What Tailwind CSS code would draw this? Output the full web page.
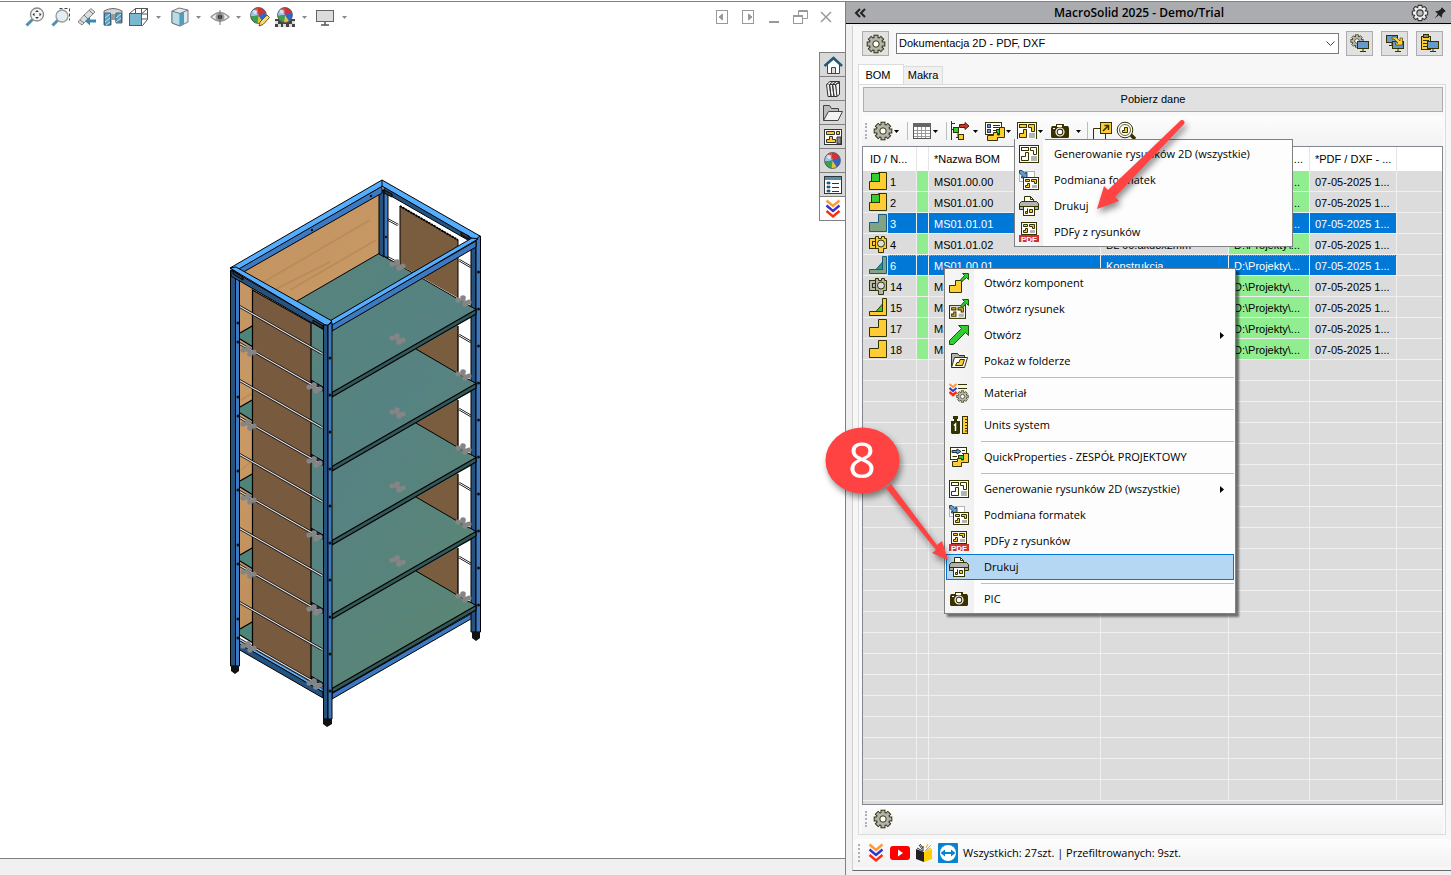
<!DOCTYPE html>
<html lang="pl">
<head>
    <meta charset="UTF-8">
    <meta name="viewport" content="width=device-width, initial-scale=1.0">
    <title>MacroSolid 2025 - Demo/Trial</title>
    <script src="https://cdn.jsdelivr.net/npm/@tailwindcss/browser@4"></script>
</head>
<body class="h-screen overflow-hidden bg-white pt-px font-['Open_Sans',sans-serif] text-[11px] text-black">

    <!-- Icon sprite -->
    <svg class="hidden">
        <symbol id="caret" viewBox="0 0 5 3"><path d="M0 0H5L2.5 3z" fill="currentColor"/></symbol>
        <symbol id="gear" viewBox="0 0 20 20">
            <g fill="#b3b3b3" stroke="#333300">
                <circle cx="10" cy="10" r="6.7"/>
                <rect x="8" y="1.2" width="4" height="17.6"/>
                <rect x="8" y="1.2" width="4" height="17.6" transform="rotate(45 10 10)"/>
                <rect x="8" y="1.2" width="4" height="17.6" transform="rotate(90 10 10)"/>
                <rect x="8" y="1.2" width="4" height="17.6" transform="rotate(135 10 10)"/>
                <circle cx="10" cy="10" r="6.2" stroke="none"/>
                <circle cx="10" cy="10" r="3.2" fill="#fff"/>
            </g>
        </symbol>
        <symbol id="logo" viewBox="0 0 20 20">
            <g fill="none" stroke-width="2.4">
                <path d="M3.5 1.5L10 7L16.5 1.5" stroke="#ff9933"/>
                <path d="M3.5 6.5L10 12L16.5 6.5" stroke="#3333cc"/>
                <path d="M3.5 12L10 17.5L16.5 12" stroke="#ff2a10"/>
            </g>
        </symbol>
        <symbol id="part" viewBox="0 0 18 18"><path d="M9.5 .5H17.5V17.5H.5V8.5H9.5z" fill="#ffcc33" stroke="#333300"/></symbol>
        <symbol id="part-sel" viewBox="0 0 18 18"><path d="M9.5 .5H17.5V17.5H.5V8.5H9.5z" fill="#80a285" stroke="#1a5a7c"/></symbol>
        <symbol id="asm" viewBox="0 0 18 18">
            <path d="M9.5 .5H17.5V17.5H.5V9.5H9.5z" fill="#ffcc33" stroke="#333300"/>
            <rect x="2.5" y="1.5" width="8" height="8" fill="#33cc33" stroke="#333300"/>
        </symbol>
        <symbol id="weld" viewBox="0 0 18 18">
            <path d="M13.5 .5H17.5V17.5H.5V13.5H13.5z" fill="#ffcc33" stroke="#333300"/>
            <path d="M13.5 6V13.5H7z" fill="#33cc33" stroke="#333300"/>
        </symbol>
        <symbol id="weld-sel" viewBox="0 0 18 18">
            <path d="M13.5 .5H17.5V17.5H.5V13.5H13.5z" fill="#80a285" stroke="#1a5a7c"/>
            <path d="M13.5 6V13.5H7z" fill="#1aa284" stroke="#1a5a7c"/>
        </symbol>
        <symbol id="purchased" viewBox="0 0 18 18">
            <g fill="currentColor" stroke="#333300">
                <path d="M6.5 1.5H9.5V3.5H12.5V1.5H15.5V3.5H17.5V13.5H14.5V17.5H9.5V13.5H6.5z"/>
                <rect x=".5" y="3.5" width="6" height="10"/>
                <rect x="3.5" y="6.5" width="3" height="4"/>
                <circle cx="12" cy="8.5" r="3.5" fill="#ddd"/>
            </g>
        </symbol>
        <symbol id="grid" viewBox="0 0 20 20">
            <rect x="1.5" y="2.5" width="17" height="15" fill="#fff" stroke="#555"/>
            <rect x="1" y="2" width="18" height="4" fill="#666"/>
            <path d="M5.5 6V17M9.5 6V17M13.5 6V17M2 9.5H18M2 12.5H18M2 15.5H18" stroke="#999"/>
        </symbol>
        <symbol id="tree" viewBox="0 0 20 20">
            <path d="M1.5 0V19M1.5 2.5H5M1.5 8.5H5M8 8.5V16M6 16.5H9" fill="none" stroke="#333300"/>
            <rect x="3.5" y="6.5" width="5" height="5" fill="#33cc33" stroke="#333300"/>
            <rect x="8.5" y="13.5" width="5" height="5" fill="#ffcc33" stroke="#333300"/>
            <path d="M9.5 3.5H15V1.5L19 5L15 8.5V6.5H9.5z" fill="#cc3333" stroke="#5a1a00"/>
        </symbol>
        <symbol id="list-part" viewBox="0 0 20 20">
            <rect x=".5" y="1.5" width="16" height="12" fill="#fff" stroke="#333300"/>
            <rect x="2.5" y="3.5" width="3" height="3" fill="#6699cc" stroke="#336"/>
            <rect x="2.5" y="8.5" width="3" height="3" fill="#6699cc" stroke="#336"/>
            <path d="M8 4.5H15M8 6.5H15M8 9.5H11" stroke="#333300"/>
            <rect x="11.5" y="8.5" width="4" height="4" fill="#33cc33" stroke="#333300"/>
            <path d="M14.5 6.5H19.5V16.5H12.5V19.5H2.5V14.5H8.5V11.5H12.5V14H14.5z" fill="#ffcc33" stroke="#333300"/>
        </symbol>
        <symbol id="quick" viewBox="0 0 20 20">
            <rect x="1.5" y=".5" width="16" height="12" fill="#fff" stroke="#333300"/>
            <path d="M3 3.5H8V2L12 4.5L8 7V5.5H3z" fill="#6699cc" stroke="#234"/>
            <path d="M13 3.5H16M13 6.5H16M3.5 9.5H8" stroke="#333300"/>
            <rect x="9.5" y="8.5" width="5" height="4" fill="#33cc33" stroke="#333300"/>
            <path d="M14.5 6.5H19.5V15.5H12.5V19.5H3.5V14.5H8.5V11.5H12.5V13H14.5z" fill="#ffcc33" stroke="#333300"/>
        </symbol>
        <symbol id="sheet" viewBox="0 0 20 20">
            <rect x=".5" y="1.5" width="19" height="17" fill="#fff" stroke="#333300"/>
            <g fill="currentColor" stroke="#333300">
                <rect x="2.5" y="3.5" width="7" height="3"/>
                <path d="M11.5 3.5H17.5V10.5H14.5V6.5H11.5z"/>
                <path d="M6.5 8.5H9.5V16.5H2.5V12.5H6.5z"/>
            </g>
            <rect x="12" y="12" width="6" height="5" fill="#b3b3b3"/>
        </symbol>
        <symbol id="sheet-small" viewBox="0 0 16 13">
            <rect x=".5" y=".5" width="15" height="12" fill="#fff" stroke="#333300"/>
            <path d="M2.5 2.5H6.5V4.5H2.5zM8.5 2.5H13.5V6.5H11.5V4.5H8.5zM4.5 6.5H6.5V10.5H2.5V8.5H4.5z" fill="#ffcc33" stroke="#333300"/>
            <rect x="9" y="8" width="5" height="3" fill="#b3b3b3"/>
        </symbol>
        <symbol id="swap" viewBox="0 0 20 20">
            <rect x=".5" y="1.5" width="15" height="10" fill="#fff" stroke="#b3b3b3"/>
            <path d="M.5 .5H3L6.5 4V2.5H8V8H2.5V6.5H4L.5 3z" fill="#6699cc" stroke="#24466b"/>
            <use href="#sheet-small" x="4" y="7" width="16" height="13"/>
        </symbol>
        <symbol id="printer" viewBox="0 0 20 20">
            <path d="M5.5 6.5V.5H11.5L14.5 3.5V6.5z" fill="#fff" stroke="#333300"/>
            <path d="M11.5 .5V3.5H14.5" fill="none" stroke="#333300"/>
            <path d="M2.5 5.5H17.5L19.5 7.5V13.5H.5V7.5z" fill="#b3b3b3" stroke="#333300"/>
            <path d="M.5 10.5H19.5" stroke="#333300"/>
            <rect x="4.5" y="10.5" width="11" height="9" fill="#fff" stroke="#333300"/>
            <path d="M8.5 12.5V17.5H6.5V15.5H8.5M10.5 13.500H13.500V16.500H10.500z" fill="#ffcc33" stroke="#333300"/>
        </symbol>
        <symbol id="pdf" viewBox="0 0 20 20">
            <use href="#sheet-small" x="2" y="0" width="16" height="13"/>
            <rect x="0" y="13" width="20" height="7" fill="#cc3333"/>
            <text x="10" y="19.500" text-anchor="middle" font-family="Liberation Sans, sans-serif" font-size="8" font-weight="700" fill="#fff">PDF</text>
        </symbol>
        <symbol id="camera" viewBox="0 0 20 20">
            <path d="M1 7L2 5H6V3H14V5H18L19 7V16L18 17H2L1 16z" fill="#3a3000"/>
            <rect x="7" y="4" width="5" height="2" fill="#fff"/>
            <rect x="3" y="7" width="2" height="1" fill="#fff"/>
            <circle cx="10" cy="11" r="4" fill="#3a3000" stroke="#fff" stroke-width="1.2"/>
            <circle cx="10" cy="11" r="2.3" fill="#fff"/>
        </symbol>
        <symbol id="popout" viewBox="0 0 20 20">
            <path d="M.5 19V7.5H8M12.5 12V19" fill="none" stroke="#333300"/>
            <rect x="7.5" y="1.5" width="11" height="11" fill="#ffcc33" stroke="#333300"/>
            <path d="M10 10L15.5 4.5M11.5 4.5H15.5V9" fill="none" stroke="#333300" stroke-width="1.5"/>
        </symbol>
        <symbol id="find-part" viewBox="0 0 20 20">
            <path d="M14 13L19 18" stroke="#333300" stroke-width="3.5"/>
            <circle cx="9" cy="9" r="7.8" fill="#fff" stroke="#333300"/>
            <circle cx="9" cy="9" r="5.5" fill="#fff" stroke="#666633"/>
            <path d="M8.5 6.5H11.5V11.5H6.5V9.5H8.5z" fill="#ffcc33" stroke="#333300"/>
        </symbol>
        <symbol id="go" viewBox="0 0 9 9"><path d="M2.5 .5H8.5V6.5L6.5 4.5L2 8.5L.5 7L4.5 2.5z" fill="#33cc33" stroke="#1a5a00"/></symbol>
        <symbol id="open-part" viewBox="0 0 20 20">
            <path d="M6.5 7.5H12.5V19.5H.5V12.5H6.5z" fill="#ffcc33" stroke="#333300"/>
            <use href="#go" x="11" y="0" width="9" height="9"/>
        </symbol>
        <symbol id="open-sheet" viewBox="0 0 20 20">
            <use href="#sheet-small" x="0" y="6" width="17" height="14"/>
            <use href="#go" x="11" y="0" width="9" height="9"/>
        </symbol>
        <symbol id="open" viewBox="0 0 20 20"><path d="M9.5 .5H19.5V10.5L16.5 7.5L4.5 19.5H.5V15.5L12.5 3.5z" fill="#33cc33" stroke="#1a5a00"/></symbol>
        <symbol id="folder-part" viewBox="0 0 20 20">
            <path d="M2.5 16.5V2.5H8.5L10 4.5H15.5V7" fill="#b3b3b3" stroke="#333300"/>
            <path d="M5.5 6.5H18.5L15.5 16.5H2.5z" fill="#fff" stroke="#333300"/>
            <path d="M11 8.5H15.5L13.5 14.5H6.5L8 11.5H10z" fill="#ffcc33" stroke="#333300"/>
        </symbol>
        <symbol id="material" viewBox="0 0 20 20">
            <path d="M.5 1L4 4L7.5 1" fill="none" stroke="#ff9933" stroke-width="2"/>
            <path d="M.5 5L4 8L7.5 5" fill="none" stroke="#3333cc" stroke-width="2"/>
            <path d="M.5 9L4 12L7.5 9" fill="none" stroke="#ff2a10" stroke-width="2.5"/>
            <path d="M9 1.5H18M9 5.5H18" stroke="#333300"/>
            <use href="#gear" x="7" y="7" width="13" height="13"/>
        </symbol>
        <symbol id="units" viewBox="0 0 20 20">
            <path d="M4 1H9V4H8V6H11V18L10 19H3L2 18V6H5V4H4z" fill="#333300"/>
            <path d="M5 10.5L6.5 9V16" fill="none" stroke="#fff" stroke-width="1.5"/>
            <rect x="13.5" y="1.5" width="5" height="17" fill="#ffcc33" stroke="#333300"/>
            <path d="M16 4.5H19M16 7.5H19M16 10.5H19M16 13.5H19M16 16H19" stroke="#333300"/>
        </symbol>
        <symbol id="screen" viewBox="0 0 12 11">
            <rect x=".5" y=".5" width="11" height="7" fill="#6699cc" stroke="#333300"/>
            <path d="M6 8V10M3 10.5H9" stroke="#333300"/>
        </symbol>
        <symbol id="gear-screen" viewBox="0 0 20 20">
            <use href="#gear" x="0" y="0" width="14" height="14"/>
            <use href="#screen" x="7" y="7" width="12" height="11"/>
        </symbol>
        <symbol id="screens" viewBox="0 0 20 20">
            <use href="#screen" x="1" y="1" width="12" height="11"/>
            <use href="#screen" x="7" y="7" width="12" height="11"/>
            <path d="M7 3H11L15 7V4H17.5V11H10.5V9H13L9 5H7z" fill="#ffcc33" stroke="#333300" stroke-width=".6"/>
        </symbol>
        <symbol id="clip-screen" viewBox="0 0 20 20">
            <rect x="1.500" y="2.500" width="9" height="13" fill="#ffcc33" stroke="#333300"/>
            <rect x="3.500" y=".5" width="5" height="3" fill="#888" stroke="#333300"/>
            <path d="M3 6.500H9M3 9.500H9M3 12.500H9" stroke="#333300"/>
            <use href="#screen" x="7" y="7" width="12" height="11"/>
        </symbol>
        <symbol id="ball" viewBox="0 0 16 16">
            <circle cx="8" cy="8" r="7.5" fill="#2f66c8"/>
            <path d="M8 8L7 .5A7.5 7.5 0 0 1 13 2.500L15 5z" fill="#d93030"/>
            <path d="M8 8L7 .5A7.5 7.5 0 0 0 .6 9z" fill="#9fc4ea"/>
            <path d="M8 8L.6 9A7.500 7.500 0 0 0 7 15.500z" fill="#3aa04a"/>
            <path d="M8 8L7 15.500A7.500 7.500 0 0 0 12 14.300z" fill="#e8c23a"/>
            <path d="M8 8L7 .5A7.500 7.500 0 0 0 3.500 2L6 5z" fill="#e04848"/>
            <circle cx="5" cy="4.500" r="2" fill="#fff" fill-opacity=".6"/>
            <circle cx="8" cy="8" r="7.500" fill="none" stroke="#555" stroke-width=".7"/>
        </symbol>
    </svg>

    <div class="flex h-full border-t border-[#808080]">

        <!-- Model view -->
        <main class="flex min-w-0 flex-1 flex-col">
            <div class="flex h-[50px] shrink-0 items-start justify-between pt-[5px] pr-[13px] pl-[25px]">
                <div class="flex items-center text-[#8a8a8a]">
                    <button aria-label="Powiększ do dopasowania" class="mr-[6px]">
                        <svg width="20" height="20" viewBox="0 0 20 20"><path d="M1.5 18.5L7.5 12.5" stroke="#4f8fb0" stroke-width="3"/><circle cx="12" cy="7.5" r="6.5" fill="#f4f4f4" stroke="#888" stroke-width="1.3"/><path d="M12 3L13.8 5H10.2zM12 12L13.8 10H10.2zM7.5 7.5L9.5 5.7V9.3zM16.5 7.5L14.5 5.7V9.3z" fill="#333"/></svg>
                    </button>
                    <button aria-label="Powiększ obszar" class="mr-[6px]">
                        <svg width="20" height="20" viewBox="0 0 20 20"><path d="M8.5 1.5H18.5V13.5" fill="none" stroke="#444" stroke-dasharray="3 2"/><path d="M1.5 18.5L6.5 13.5" stroke="#4f8fb0" stroke-width="3"/><circle cx="11" cy="9" r="6" fill="#e2eef4" stroke="#999" stroke-width="1.3"/></svg>
                    </button>
                    <button aria-label="Poprzedni widok" class="mr-[6px]">
                        <svg width="20" height="20" viewBox="0 0 20 20"><path d="M1 15L7 8L14 1.5L18 5L10 13L5 18z" fill="#ddd" stroke="#888"/><path d="M7 8L11 12M12 3L16 7M3 13L7 16" stroke="#777"/><path d="M19 12.5H13V9.5L8 14L13 18.5V15.5H19z" fill="#3f87ab"/></svg>
                    </button>
                    <button aria-label="Przekrój" class="mr-[6px]">
                        <svg width="20" height="20" viewBox="0 0 20 20"><path d="M1 4Q10-1 19 4V16H13V8H8V18H1z" fill="#d5d5d5" stroke="#666"/><path d="M8 8V13H13V8z" fill="#999"/><path d="M1.5 6H7.5V18H1.5zM13 6H18.5V15H13z" fill="#5aa0c2" stroke="#37667f"/><path d="M2 11L7 7M2 15L7 11M3 18L7 15M13 11L18 7M13 15L18 11" stroke="#c8e4ef"/></svg>
                    </button>
                    <button aria-label="Orientacja widoku" class="mr-[7px]">
                        <svg width="20" height="20" viewBox="0 0 20 20"><path d="M6.5 1.5H18.5V12.5L13.5 18.5H.5V6.5zM6.5 1.5V12H18M18.5 1.5L13 6.5M12.5 2V12M6 7H18" fill="#fff" stroke="#555"/><rect x=".5" y="6.5" width="12" height="12" fill="#7db6d0" stroke="#37667f"/></svg>
                    </button>
                    <svg width="5" height="3" class="mr-[9px]"><use href="#caret"/></svg>
                    <button aria-label="Styl wyświetlania" class="mr-[6px]">
                        <svg width="20" height="20" viewBox="0 0 20 20"><path d="M2 4L9 1L18 3V15L10 19L2 16z" fill="#dceaf0" stroke="#777"/><path d="M2 4L10 6.5V19L2 16z" fill="#b9dbe8" stroke="#777"/><path d="M10 6.5L14 5V17L10 19z" fill="#4f9cbd"/><path d="M10 6.5L18 3" stroke="#777"/></svg>
                    </button>
                    <svg width="5" height="3" class="mr-[9px]"><use href="#caret"/></svg>
                    <button aria-label="Pokaż lub ukryj elementy" class="mr-[6px]">
                        <svg width="20" height="20" viewBox="0 0 20 20"><path d="M1 10Q10 1 19 10Q10 18 1 10z" fill="#f0f0f0" stroke="#999" stroke-width="1.4"/><circle cx="10" cy="10" r="4.5" fill="#999"/><circle cx="10" cy="10" r="2.3" fill="#333"/><path d="M10 3V18" stroke="#777"/></svg>
                    </button>
                    <svg width="5" height="3" class="mr-[9px]"><use href="#caret"/></svg>
                    <button aria-label="Edytuj wygląd" class="mr-[5px]">
                        <svg width="20" height="20" viewBox="0 0 20 20"><use href="#ball" x="0" y="0" width="17" height="17"/><path d="M9 19L10 15L17 8L19.5 10.5L13 17.5z" fill="#f6dc70" stroke="#6b5a20"/></svg>
                    </button>
                    <button aria-label="Zastosuj scenę" class="mr-[7px]">
                        <svg width="20" height="20" viewBox="0 0 20 20"><rect y="12" width="20" height="8" fill="#444"/><path d="M0 14H3V17H0zM3 17H6V20H3zM14 17H17V20H14zM17 14H20V17H17zM8 17H11V20H8z" fill="#ddd"/><use href="#ball" x="2" y="0" width="16" height="16"/></svg>
                    </button>
                    <svg width="5" height="3" class="mr-[8px]"><use href="#caret"/></svg>
                    <button aria-label="Ustawienia widoku" class="mr-[7px]">
                        <svg width="20" height="20" viewBox="0 0 20 20"><rect x="1.5" y="3.5" width="17" height="11" fill="#dcdcdc" stroke="#666"/><path d="M10 15V18M6 18H14" stroke="#555" stroke-width="1.5"/></svg>
                    </button>
                    <svg width="5" height="3"><use href="#caret"/></svg>
                </div>
                <div class="flex items-center pt-[3px]">
                    <button aria-label="Poprzednie okno" class="mr-[13px]"><svg width="13" height="14" viewBox="0 0 13 14" fill="none" stroke="#999"><rect x=".5" y=".5" width="11" height="13"/><path d="M6.5 4V10L3 7z" fill="#999"/></svg></button>
                    <button aria-label="Następne okno" class="mr-[14px]"><svg width="13" height="14" viewBox="0 0 13 14" fill="none" stroke="#999"><rect x=".5" y=".5" width="11" height="13"/><path d="M6.5 4V10L10 7z" fill="#999"/></svg></button>
                    <button aria-label="Minimalizuj" class="mr-[14px]"><svg width="10" height="14"><rect y="11" width="10" height="2" fill="#999"/></svg></button>
                    <button aria-label="Przywróć" class="mr-[12px]"><svg width="15" height="14" viewBox="0 0 15 14" fill="none" stroke="#999"><path d="M5.5 5V.5H14.5V8.5H10M5.5 1.5H14.5"/><rect x=".5" y="5.5" width="9" height="8"/><path d="M.5 6.5H9.5"/></svg></button>
                    <button aria-label="Zamknij"><svg width="12" height="14" viewBox="0 0 12 14"><path d="M1 2L11 12M11 2L1 12" stroke="#999" stroke-width="1.5"/></svg></button>
                </div>
            </div>

            <div class="flex min-h-0 flex-1 items-start">
                <!-- Shelving unit -->
                <div class="flex h-full min-w-0 flex-1 items-center pl-[225px]">
                    <svg width="260" height="558" viewBox="225 176 260 558" role="img" aria-label="Model regału">
                        <defs>
                            <linearGradient id="wood" x2=".3" y2="1"><stop stop-color="#c0925f"/><stop offset=".5" stop-color="#c99a66"/><stop offset="1" stop-color="#bb8c58"/></linearGradient>
                            <linearGradient id="teal" x2=".6" y2="1"><stop stop-color="#56847c"/><stop offset=".5" stop-color="#568282"/><stop offset="1" stop-color="#5b8574"/></linearGradient>
                            <g id="clip" fill="#858585">
                                <circle cx="-5" cy="-1" r="2.6"/><circle cx="0" cy="-3" r="2.8"/><circle cx="2" cy="3" r="2.8"/><circle cx="6" cy="1" r="2.6"/>
                                <path d="M-5-1L6 1" stroke="#858585" stroke-width="2"/>
                            </g>
                            <g id="bay">
                                <path d="M416 349.5L458 325.5V373z" fill="#7a5c3f"/>
                                <path d="M458 325L471 318V381L458 373z" fill="#fff"/>
                                <path d="M458 326V373" stroke="#000" stroke-width="1.3"/>
                                <path d="M416 349L476 384" stroke="#000"/>
                                <path d="M459 335L471 342" stroke="#000" stroke-width="2.4"/>
                                <path d="M459 335L471 342" stroke="#fff"/>
                            </g>
                            <g id="edge">
                                <path d="M469 305.5L476 309.5L469 314z" fill="#568282"/>
                                <path d="M469 305.5L476 309.5" stroke="#000"/>
                                <path d="M332 392.5L476 309.5V314L332 397z" fill="#34575a" stroke="#000" stroke-width="1.2"/>
                            </g>
                            <g id="side">
                                <path d="M240 333L253 325.5V347L240 339z" fill="#4f8478"/>
                                <path d="M240 333L253 325.5M240 339L253 347" stroke="#000" stroke-width="1.3"/>
                                <path d="M311 380L323 387V391L311 384z" fill="#234" stroke="#000"/>
                            </g>
                            <g id="rod">
                                <path d="M237 305L322 353.5" stroke="#111" stroke-width="2.6"/>
                                <path d="M237 305L322 353.5" stroke="#e8e8e8" stroke-width="1.1"/>
                            </g>
                        </defs>

                        <!-- panels -->
                        <path d="M239 272L379 192V254L298 302L253 327V640L239 632z" fill="url(#wood)"/>
                        <path d="M250 290L370 220M262 296L330 262M290 290L376 240M241 400L251 394M241 470L251 462M241 560L251 552" stroke="#a97c4b" stroke-opacity=".45" stroke-width="1.5"/>
                        <path d="M297 301L379 253.5L477 310V608L333 692L311 690V312z" fill="url(#teal)"/>
                        <g stroke="#4a8a8c" stroke-opacity=".35" stroke-width="2">
                            <path d="M325 310L400 280M335 340L440 300M335 362L420 322M335 430L450 368M335 445L420 396M335 505L450 440M335 525L420 478M335 580L450 514M335 600L420 550M335 650L450 588M335 670L420 622"/>
                        </g>
                        <path d="M297 301L379 253.5L477 310" fill="none" stroke="#000"/>
                        <path d="M458 240L471 247V306L458 298z" fill="#fff"/>
                        <path d="M400 206L458 240V298L400 265z" fill="#7a5c3f"/>
                        <path d="M400 265V206L458 240V298" fill="none" stroke="#000"/>
                        <path d="M400 206L458 240" stroke="#000" stroke-width="2" stroke-dasharray="2 1"/>
                        <g stroke="#000" stroke-width="2.4"><path d="M387 219L398 225M387 257L398 263M459 260L471 267"/></g>
                        <g stroke="#fff"><path d="M387 219L398 225M387 257L398 263M459 260L471 267"/></g>

                        <use href="#bay"/><use href="#bay" y="74"/><use href="#bay" y="148"/><use href="#bay" y="222"/>
                        <use href="#side"/><use href="#side" y="74"/><use href="#side" y="148"/><use href="#side" y="222"/><use href="#side" y="296"/>

                        <!-- lower rails -->
                        <path d="M332 693.5L476 611V616L332 699z" fill="#3c79c0" stroke="#000"/>
                        <path d="M238 640L323 689V692L238 643z" fill="#5ab0ff" stroke="#000" stroke-width=".7"/>
                        <path d="M238 643L323 692V698L238 649z" fill="#26527f" stroke="#000"/>

                        <!-- left panel -->
                        <path d="M252.5 290L311 323V681L252.5 646z" fill="#785a3e" stroke="#000" stroke-width="1.2"/>
                        <path d="M253 289L311 322" stroke="#c8a070" stroke-dasharray="2 1"/>
                        <use href="#rod"/><use href="#rod" y="37"/><use href="#rod" y="74"/><use href="#rod" y="111"/><use href="#rod" y="148"/>
                        <use href="#rod" y="185"/><use href="#rod" y="222"/><use href="#rod" y="259"/><use href="#rod" y="296"/><use href="#rod" y="333"/>

                        <!-- posts -->
                        <g stroke="#000">
                            <path d="M379 190H384V257L379 254z" fill="#26527f"/>
                            <path d="M384 192H388V258L384 256z" fill="#3c79c0"/>
                            <path d="M471 240H476V632H471z" fill="#26527f"/>
                            <path d="M476 236H480.5V632H476z" fill="#3c79c0"/>
                            <path d="M230.5 270H235.5V666H230.5z" fill="#26527f"/>
                            <path d="M235.5 272H239.5V666H235.5z" fill="#3c79c0"/>
                        </g>

                        <use href="#edge"/><use href="#edge" y="74"/><use href="#edge" y="148"/><use href="#edge" y="222"/><use href="#edge" y="296"/>

                        <!-- top frame -->
                        <g stroke="#000">
                            <path d="M236 269L382 186V193L240 274z" fill="#3c79c0"/>
                            <path d="M230 268L382 180L386 184L237 270z" fill="#55adff"/>
                            <path d="M384 186L473 237V243L384 192z" fill="#26527f"/>
                            <path d="M382 180L480 236L475 240L382 186z" fill="#55adff"/>
                            <path d="M332 324L476 241V247L332 331z" fill="#3c79c0"/>
                            <path d="M328 322L472 238L478 239L332 325z" fill="#55adff"/>
                            <path d="M231 270L326 325V331L231 276z" fill="#26527f"/>
                            <path d="M230 268L236 267L332 321L327 326z" fill="#55adff"/>
                            <path d="M323.5 325H328V719H323.5z" fill="#26527f"/>
                            <path d="M328 325L332 322.5V719H328z" fill="#3c79c0"/>
                        </g>
                        <g fill="#333" stroke="#000">
                            <path d="M384 190L392 194V197L384 193zM461 232L469 236V239L461 235zM233 271L243 277V280L233 274zM313 320L323 326V329L313 323z"/>
                        </g>
                        <g fill="#111">
                            <path d="M472 632H480V638L476 641L472 638zM231 666H239V671L235 674L231 671zM323 719H332V724L327 727L323 724z"/>
                            <g id="bolts"><circle cx="330" cy="358" r="1.5"/><circle cx="330" cy="395" r="1.5"/><circle cx="478.5" cy="272" r="1.5"/><circle cx="478.5" cy="309" r="1.5"/><circle cx="238" cy="323" r="1.5"/><circle cx="238" cy="342" r="1.5"/></g>
                            <use href="#bolts" y="74"/><use href="#bolts" y="148"/><use href="#bolts" y="222"/><use href="#bolts" y="296"/>
                            <circle cx="312" cy="230" r="1.2"/><circle cx="371" cy="196" r="1.2"/><circle cx="386" cy="237" r="1.2"/>
                        </g>

                        <g id="clips-row"><use href="#clip" x="248" y="351"/><use href="#clip" x="314" y="388"/><use href="#clip" x="463" y="301"/></g>
                        <use href="#clips-row" y="74"/><use href="#clips-row" y="148"/><use href="#clips-row" y="222"/><use href="#clips-row" y="296"/>
                        <use href="#clip" x="397" y="265"/><use href="#clip" x="397" y="339"/><use href="#clip" x="397" y="413"/><use href="#clip" x="397" y="487"/><use href="#clip" x="397" y="561"/>
                    </svg>
                </div>

                <!-- Task pane tabs -->
                <nav class="-mr-px flex w-[27px] shrink-0 flex-col border-r border-b border-l border-[#808080]">
                    <button aria-label="Zasoby" class="flex h-6 items-center justify-center border-t border-[#808080] bg-[#d9d9d9]"><svg width="20" height="20" viewBox="0 0 20 20"><path d="M4.5 9V18.5H16.5V9L10.5 4z" fill="#fff" stroke="#444"/><path d="M8.5 18V12.5H12.5V18" fill="#ddd" stroke="#444"/><path d="M1.5 11L10.5 3L19 11" fill="none" stroke="#1f5a7d" stroke-width="2.5"/></svg></button>
                    <button aria-label="Biblioteka projektu" class="flex h-6 items-center justify-center border-t border-[#808080] bg-[#d9d9d9]"><svg width="20" height="20" viewBox="0 0 20 20" fill="#f4f4f4" stroke="#333"><path d="M12.5 5.5L16.5 3.5V15.5L13.5 17.5zM9.5 5.5L13.500 2.500L16.500 3.500L12.500 5.500M7.500 6.500L9.500 17.500L13.500 17.500L11.500 5.500z"/><path d="M3.500 5.500H6.500L8 17.500H5zM6.500 5.500H9.500L11 17.500H8zM9.500 5.500H12.500L14 17.500H11z"/><path d="M3.500 5.500L7 2.500H10L6.500 5.500M9.500 5.500L13 2.500H10M12.500 5.500L16.500 2.500H13"/></svg></button>
                    <button aria-label="Eksplorator plików" class="flex h-6 items-center justify-center border-t border-[#808080] bg-[#d9d9d9]"><svg width="20" height="20" viewBox="0 0 20 20" stroke="#444"><path d="M.5 17.5V2.5H6.5L8.5 5.5H15.5V8" fill="#bbb"/><path d="M5.5 8.5H19.5L15 17.5H.5z" fill="#f2f2f2"/></svg></button>
                    <button aria-label="Paleta widoków" class="flex h-6 items-center justify-center border-t border-[#808080] bg-[#d9d9d9]"><svg width="20" height="20" viewBox="0 0 20 20" stroke="#333"><rect x="1.5" y="2.5" width="17" height="15" fill="#fff"/><path d="M3.5 4.5H11.5V7.5H3.5zM13.5 4.5H16.5V7.5H13.5zM6.5 9.5H9.5V12.5H12.5V15.5H3.5V12.5H6.5z" fill="#ffcc33"/><path d="M14 10H18V17H14z" fill="#888"/></svg></button>
                    <button aria-label="Wyglądy i sceny" class="flex h-6 items-center justify-center border-t border-[#808080] bg-[#d9d9d9]"><svg width="17" height="17"><use href="#ball"/></svg></button>
                    <button aria-label="Właściwości niestandardowe" class="flex h-6 items-center justify-center border-t border-[#808080] bg-[#d9d9d9]"><svg width="20" height="20" viewBox="0 0 20 20"><rect x="1.5" y="1.5" width="17" height="17" fill="#fff" stroke="#333"/><rect x="2" y="2" width="16" height="3" fill="#4f8fb0"/><path d="M4 7H7V9H4zM4 11H7V13H4zM4 15H7V17H4z" fill="#1f6a95" stroke="#1f4a6a" stroke-width=".6"/><path d="M9 8.5H16M9 12.5H16M9 16.5H16" stroke="#333"/></svg></button>
                    <button aria-label="MacroSolid" class="flex h-6 items-center justify-center border-t border-[#808080] bg-white"><svg width="20" height="20"><use href="#logo"/></svg></button>
                </nav>
            </div>
            <div class="h-[17px] shrink-0 border-t border-[#808080] bg-[#f0f0f0]"></div>
        </main>

        <!-- MacroSolid panel -->
        <aside class="relative flex w-[606px] shrink-0 flex-col border-l border-[#808080] bg-[#f0f0f0]">
            <header class="flex h-[22px] shrink-0 items-center border-b border-black bg-[#abacaf] pr-1 pl-2 text-xs font-semibold">
                <button aria-label="Zwiń"><svg width="13" height="10" viewBox="0 0 13 10" fill="none" stroke="#222" stroke-width="2"><path d="M6 1L2 5L6 9M11 1L7 5L11 9"/></svg></button>
                <h1 class="flex-1 text-center">MacroSolid 2025 - Demo/Trial</h1>
                <button aria-label="Opcje"><svg width="18" height="18" viewBox="0 0 20 20"><path d="M8 1.5H12L12.6 4L15 2.9L17.3 5.2L16 7.5L18.5 8V12L16 12.6L17.3 15L15 17.3L12.6 16L12 18.5H8L7.4 16L5 17.3L2.7 15L4 12.6L1.5 12V8L4 7.4L2.7 5L5 2.7L7.4 4z" fill="#eee" stroke="#333" stroke-width="1.2"/><circle cx="10" cy="10" r="3.5" fill="#bbb" stroke="#333" stroke-width="1.2"/></svg></button>
                <button aria-label="Przypnij" class="ml-1"><svg width="14" height="14" viewBox="0 0 14 14"><path d="M8.5 .5L13.5 5.5L11.5 6L9.5 8.500L9 12.500L6 9.500L.5 13.500L4.500 8L1.500 5L5.500 4.500L8 2.500z" fill="#222" stroke="#eee" stroke-width=".4"/></svg></button>
            </header>

            <div class="mt-[2px] mb-[4px] ml-[6px] flex min-h-0 flex-1 flex-col border-b border-l border-b-[#696969] border-l-[#d0d0d0] bg-[#f7f7f7]">
                <div class="flex h-[30px] shrink-0 pt-[5px] pr-2 pl-[9px]">
                    <button aria-label="Ustawienia" class="mr-[7px] flex w-[27px] items-center justify-center border border-[#adadad] bg-[#e1e1e1]"><svg width="20" height="20"><use href="#gear"/></svg></button>
                    <div class="relative my-[2px] mr-[7px] flex-1">
                        <select aria-label="Zestaw" class="block h-[21px] w-full appearance-none border border-[#7a7a7a] bg-white pl-[2px] font-['Liberation_Sans',sans-serif] text-[11px] outline-none">
                            <option>Dokumentacja 2D - PDF, DXF</option>
                        </select>
                        <svg class="pointer-events-none absolute top-[8px] right-[4px]" width="9" height="6" viewBox="0 0 9 6"><path d="M.5 .5L4.5 4.5L8.5 .5" fill="none" stroke="#444"/></svg>
                    </div>
                    <div class="flex gap-2">
                        <button aria-label="Ustawienia stanowiska" class="flex w-[27px] items-center justify-center border border-[#adadad] bg-[#e1e1e1]"><svg width="20" height="20"><use href="#gear-screen"/></svg></button>
                        <button aria-label="Kopiuj ustawienia" class="flex w-[27px] items-center justify-center border border-[#adadad] bg-[#e1e1e1]"><svg width="20" height="20"><use href="#screens"/></svg></button>
                        <button aria-label="Wklej ustawienia" class="flex w-[27px] items-center justify-center border border-[#adadad] bg-[#e1e1e1]"><svg width="20" height="20"><use href="#clip-screen"/></svg></button>
                    </div>
                </div>

                <div class="mt-2 flex h-5 shrink-0 items-end pl-[5px] font-['Liberation_Sans',sans-serif]" role="tablist">
                    <button role="tab" aria-selected="true" class="-mb-px h-[21px] w-[46px] border border-b-0 border-[#dcdcdc] bg-white pr-[6px]">BOM</button>
                    <button role="tab" aria-selected="false" class="h-[18px] w-[39px] border border-b-0 border-l-0 border-[#dcdcdc] bg-[#f0f0f0]">Makra</button>
                </div>

                <section class="mr-[5px] ml-[5px] flex min-h-0 flex-1 flex-col border border-[#dcdcdc] bg-[#f9f9f9] pt-[2px] pr-[2px] pl-[3px]">
                    <button class="ml-px h-[25px] shrink-0 border border-[#adadad] bg-[#e1e1e1] font-['Liberation_Sans',sans-serif]">Pobierz dane</button>

                    <div class="mt-[4px] flex h-[30px] shrink-0 items-center rounded bg-linear-to-b from-[#fdfdfd] to-[#f2f2f2] pl-[3px]" role="toolbar">
                        <span class="mr-[6px] h-4 border-l-2 border-dotted border-[#b0b0b0]"></span>
                        <button aria-label="Opcje" class="flex items-center gap-px"><svg width="20" height="20"><use href="#gear"/></svg><svg width="5" height="3"><use href="#caret"/></svg></button>
                        <span class="mr-[4px] ml-[8px] h-[18px] border-l border-[#bdbdbd]"></span>
                        <button aria-label="Kolumny" class="flex items-center gap-px"><svg width="20" height="20"><use href="#grid"/></svg><svg width="5" height="3"><use href="#caret"/></svg></button>
                        <span class="mr-[3px] ml-[8px] h-[18px] border-l border-[#bdbdbd]"></span>
                        <button aria-label="Struktura" class="mr-[7px] flex items-center gap-[3px]"><svg width="20" height="20"><use href="#tree"/></svg><svg width="5" height="3"><use href="#caret"/></svg></button>
                        <button aria-label="Właściwości" class="mr-[6px] flex items-center gap-px"><svg width="20" height="20"><use href="#list-part"/></svg><svg width="5" height="3"><use href="#caret"/></svg></button>
                        <button aria-label="Rysunki" class="mr-[7px] flex items-center gap-px text-[#ffcc33]"><svg width="20" height="20"><use href="#sheet"/></svg><svg width="5" height="3" class="text-black"><use href="#caret"/></svg></button>
                        <button aria-label="Zdjęcie" class="flex items-center gap-[6px]"><svg width="20" height="20"><use href="#camera"/></svg><svg width="5" height="3"><use href="#caret"/></svg></button>
                        <span class="mr-[5px] ml-[6px] h-[18px] border-l border-[#bdbdbd]"></span>
                        <button aria-label="Otwórz w nowym oknie" class="mr-[3px]"><svg width="20" height="20"><use href="#popout"/></svg></button>
                        <button aria-label="Znajdź"><svg width="20" height="20"><use href="#find-part"/></svg></button>
                    </div>

                    <div class="min-h-0 flex-1 overflow-hidden border border-[#828790] bg-[#dcdcdc] font-['Liberation_Sans',sans-serif]">
                        <table class="w-full table-fixed border-separate border-spacing-0">
                            <thead>
                                <tr class="h-6 bg-white text-left">
                                    <th class="w-[54px] border-r border-[#e5e5e5] pl-[7px] font-normal">ID / N...</th>
                                    <th class="w-3 border-r border-[#e5e5e5]"></th>
                                    <th class="w-[172px] border-r border-[#e5e5e5] pl-[5px] font-normal">*Nazwa BOM</th>
                                    <th class="w-32 border-r border-[#e5e5e5]"></th>
                                    <th class="w-[81px] border-r border-[#e5e5e5] pr-[6px] text-right font-normal">...</th>
                                    <th class="w-[87px] border-r border-[#e5e5e5] pl-[5px] font-normal">*PDF / DXF - ...</th>
                                    <th></th>
                                </tr>
                            </thead>
                            <tbody id="bomRows"></tbody>
                        </table>
                    </div>

                    <div class="flex h-[29px] shrink-0 items-center bg-linear-to-b from-[#fdfdfd] to-[#f2f2f2] pb-[2px] pl-[3px]" role="toolbar">
                        <span class="mr-[6px] h-4 border-l-2 border-dotted border-[#b0b0b0]"></span>
                        <button aria-label="Opcje listy"><svg width="20" height="20"><use href="#gear"/></svg></button>
                    </div>
                </section>

                <footer class="mt-1 mb-[3px] flex h-7 shrink-0 items-center rounded bg-linear-to-b from-[#fdfdfd] to-[#f2f2f2] pl-[5px]">
                    <span class="mr-[6px] h-[18px] border-l-2 border-dotted border-[#b0b0b0]"></span>
                    <a href="#" aria-label="MacroSolid" class="mr-1"><svg width="20" height="20"><use href="#logo"/></svg></a>
                    <a href="#" aria-label="YouTube" class="mr-1"><svg width="20" height="20" viewBox="0 0 20 20"><rect y="3" width="20" height="14" rx="3" fill="#f00"/><path d="M8 6.5L13 10L8 13.5z" fill="#fff"/></svg></a>
                    <a href="#" aria-label="Instrukcja" class="mr-1"><svg width="20" height="20" viewBox="0 0 20 20"><path d="M2 6L10 9V19L2 16z" fill="#222"/><path d="M10 9L18 6V16L10 19z" fill="#ffcc00"/><path d="M3 5L9 8V3M5 2L8 6M6 1L9 5" stroke="#333" fill="none"/><path d="M11 8L17 5M12 5L14 1M12 7L17 2" stroke="#e0b000" fill="none"/></svg></a>
                    <a href="#" aria-label="TeamViewer" class="mr-[5px]"><svg width="20" height="20" viewBox="0 0 20 20"><rect width="20" height="20" rx="1" fill="#0a82d2"/><circle cx="10" cy="10" r="8" fill="#fff"/><path d="M2.5 10L7 6.5V9H13V6.5L17.5 10L13 13.5V11H7V13.5z" fill="#0a82d2"/></svg></a>
                    <p>Wszystkich: 27szt. | Przefiltrowanych: 9szt.</p>
                </footer>
            </div>

            <!-- Drawings drop-down -->
            <div role="menu" class="absolute top-[137px] left-[168px] w-[279px] border border-[#808080] bg-[#fdfdfd] bg-linear-to-r from-[#f6f6f6] from-0% via-[#f1f1f1] via-10% to-[#fdfdfd] to-10% p-px">
                <span class="absolute -top-px left-0 h-px w-[30px] bg-[#f6f6f6]"></span>
                <button role="menuitem" class="flex h-[26px] w-full items-center gap-[15px] pl-[3px] text-white"><svg width="20" height="20"><use href="#sheet"/></svg><span class="text-black">Generowanie rysunków 2D (wszystkie)</span></button>
                <button role="menuitem" class="flex h-[26px] w-full items-center gap-[15px] pl-[3px]"><svg width="20" height="20"><use href="#swap"/></svg>Podmiana formatek</button>
                <button role="menuitem" class="flex h-[26px] w-full items-center gap-[15px] pl-[3px]"><svg width="20" height="20"><use href="#printer"/></svg>Drukuj</button>
                <button role="menuitem" class="flex h-[26px] w-full items-center gap-[15px] pl-[3px]"><svg width="20" height="20"><use href="#pdf"/></svg>PDFy z rysunków</button>
            </div>

            <!-- Row context menu -->
            <div role="menu" class="absolute top-[266px] left-[98px] w-[292px] border border-[#808080] bg-[#fdfdfd] bg-linear-to-r from-[#f6f6f6] from-0% via-[#f1f1f1] via-10% to-[#fdfdfd] to-10% p-px shadow-[3px_3px_2px_rgba(0,0,0,0.5)]">
                <button role="menuitem" class="flex h-[26px] w-full items-center gap-[15px] pl-[3px]"><svg width="20" height="20"><use href="#open-part"/></svg>Otwórz komponent</button>
                <button role="menuitem" class="flex h-[26px] w-full items-center gap-[15px] pl-[3px]"><svg width="20" height="20"><use href="#open-sheet"/></svg>Otwórz rysunek</button>
                <button role="menuitem" class="flex h-[26px] w-full items-center gap-[15px] pr-[10px] pl-[3px]"><svg width="20" height="20"><use href="#open"/></svg>Otwórz<svg class="ml-auto" width="4" height="7"><path d="M0 0L4 3.5L0 7z"/></svg></button>
                <button role="menuitem" class="flex h-[26px] w-full items-center gap-[15px] pl-[3px]"><svg width="20" height="20"><use href="#folder-part"/></svg>Pokaż w folderze</button>
                <hr class="mt-[3px] mb-[2px] ml-[35px] border-[#bdbdbd]">
                <button role="menuitem" class="flex h-[26px] w-full items-center gap-[15px] pl-[3px]"><svg width="20" height="20"><use href="#material"/></svg>Materiał</button>
                <hr class="mt-[3px] mb-[2px] ml-[35px] border-[#bdbdbd]">
                <button role="menuitem" class="flex h-[26px] w-full items-center gap-[15px] pl-[3px]"><svg width="20" height="20"><use href="#units"/></svg>Units system</button>
                <hr class="mt-[3px] mb-[2px] ml-[35px] border-[#bdbdbd]">
                <button role="menuitem" class="flex h-[26px] w-full items-center gap-[15px] pl-[3px]"><svg width="20" height="20"><use href="#quick"/></svg>QuickProperties - ZESPÓŁ PROJEKTOWY</button>
                <hr class="mt-[3px] mb-[2px] ml-[35px] border-[#bdbdbd]">
                <button role="menuitem" class="flex h-[26px] w-full items-center gap-[15px] pr-[10px] pl-[3px] text-white"><svg width="20" height="20"><use href="#sheet"/></svg><span class="text-black">Generowanie rysunków 2D (wszystkie)</span><svg class="ml-auto text-black" width="4" height="7"><path d="M0 0L4 3.5L0 7z"/></svg></button>
                <button role="menuitem" class="flex h-[26px] w-full items-center gap-[15px] pl-[3px]"><svg width="20" height="20"><use href="#swap"/></svg>Podmiana formatek</button>
                <button role="menuitem" class="flex h-[26px] w-full items-center gap-[15px] pl-[3px]"><svg width="20" height="20"><use href="#pdf"/></svg>PDFy z rysunków</button>
                <button role="menuitem" class="flex h-[26px] w-full items-center gap-[15px] border border-[#0078d7] bg-[#b5d7f3] pl-[2px]"><svg width="20" height="20"><use href="#printer"/></svg>Drukuj</button>
                <hr class="mt-[3px] mb-[2px] ml-[35px] border-[#bdbdbd]">
                <button role="menuitem" class="flex h-[26px] w-full items-center gap-[15px] pl-[3px]"><svg width="20" height="20"><use href="#camera"/></svg>PIC</button>
            </div>

            <!-- Step callout and arrows -->
            <svg class="pointer-events-none absolute top-[108px] left-[-26px] drop-shadow-[2px_4px_3px_rgba(0,0,0,0.45)]" width="400" height="480" viewBox="820 110 400 480" fill="#ff4343">
                <path d="M1180.5 120.5A2.5 2.5 0 0 1 1184 124L1115 197L1119 201L1097 209L1104 186L1108 190z"/>
                <path d="M886 488L891 484L937 545L942 541L948 560L932 553L936 550z"/>
                <ellipse cx="862.5" cy="460.5" rx="37" ry="33"/>
                <text x="862" y="478" text-anchor="middle" font-family="Open Sans, sans-serif" font-size="49" fill="#fff">8</text>
            </svg>
        </aside>
    </div>

    <script>
        const rows = [
            { id: 1, icon: 'asm', name: 'MS01.00.00', desc: '' },
            { id: 2, icon: 'asm', name: 'MS01.01.00', desc: '' },
            { id: 3, icon: 'part-sel', name: 'MS01.01.01', desc: '', selected: true },
            { id: 4, icon: 'purchased', name: 'MS01.01.02', desc: 'BL 60.aku8x2mm', tint: 'text-[#ffcc33]' },
            { id: 6, icon: 'weld-sel', name: 'MS01.00.01', desc: 'Konstrukcja', selected: true, focused: true },
            { id: 14, icon: 'purchased', name: 'MS', desc: '', tint: 'text-[#b3b3b3]' },
            { id: 15, icon: 'weld', name: 'MS', desc: '' },
            { id: 17, icon: 'part', name: 'MS', desc: '' },
            { id: 18, icon: 'part', name: 'MS', desc: '' }
        ];
        const cell = 'border-r border-b border-[#f0f0f0] overflow-hidden whitespace-nowrap p-0 pt-[2px] pl-[5px]';
        let html = '';

        for (let i = 0; i < 30; i++) {
            const row = rows[i];
            if (!row) {
                html += `<tr class="h-[21px]">${`<td class="${cell}"></td>`.repeat(6)}<td class="border-b border-[#f0f0f0]"></td></tr>`;
                continue;
            }
            const sel = row.selected ? 'bg-[#0078d7] text-white' : '';
            const green = row.selected ? sel : 'bg-[#90ee90]';
            const focus = row.focused ? 'border-t border-t-[#ff8728] [border-top-style:dotted]' : '';
            html += `<tr class="h-[21px]">
                <td class="border-r border-b border-[#f0f0f0] p-0 pl-[6px]">
                    <div class="flex h-5 items-center">
                        <svg width="18" height="18" class="shrink-0 ${row.tint || ''}"><use href="#${row.icon}"/></svg>
                        <span class="ml-px flex h-5 flex-1 items-center pt-[2px] pl-[2px] ${sel} ${focus}">${row.id}</span>
                    </div>
                </td>
                <td class="${cell} ${green} ${focus}"></td>
                <td class="${cell} ${sel} ${focus}">${row.name}</td>
                <td class="${cell} ${sel} ${focus}">${row.desc}</td>
                <td class="${cell} ${green} ${focus}">D:\\Projekty\\...</td>
                <td class="${cell} ${sel} ${focus}">07-05-2025 1...</td>
                <td class="border-b border-[#f0f0f0] p-0"></td>
            </tr>`;
        }
        document.getElementById('bomRows').innerHTML = html;
    </script>
</body>
</html>
